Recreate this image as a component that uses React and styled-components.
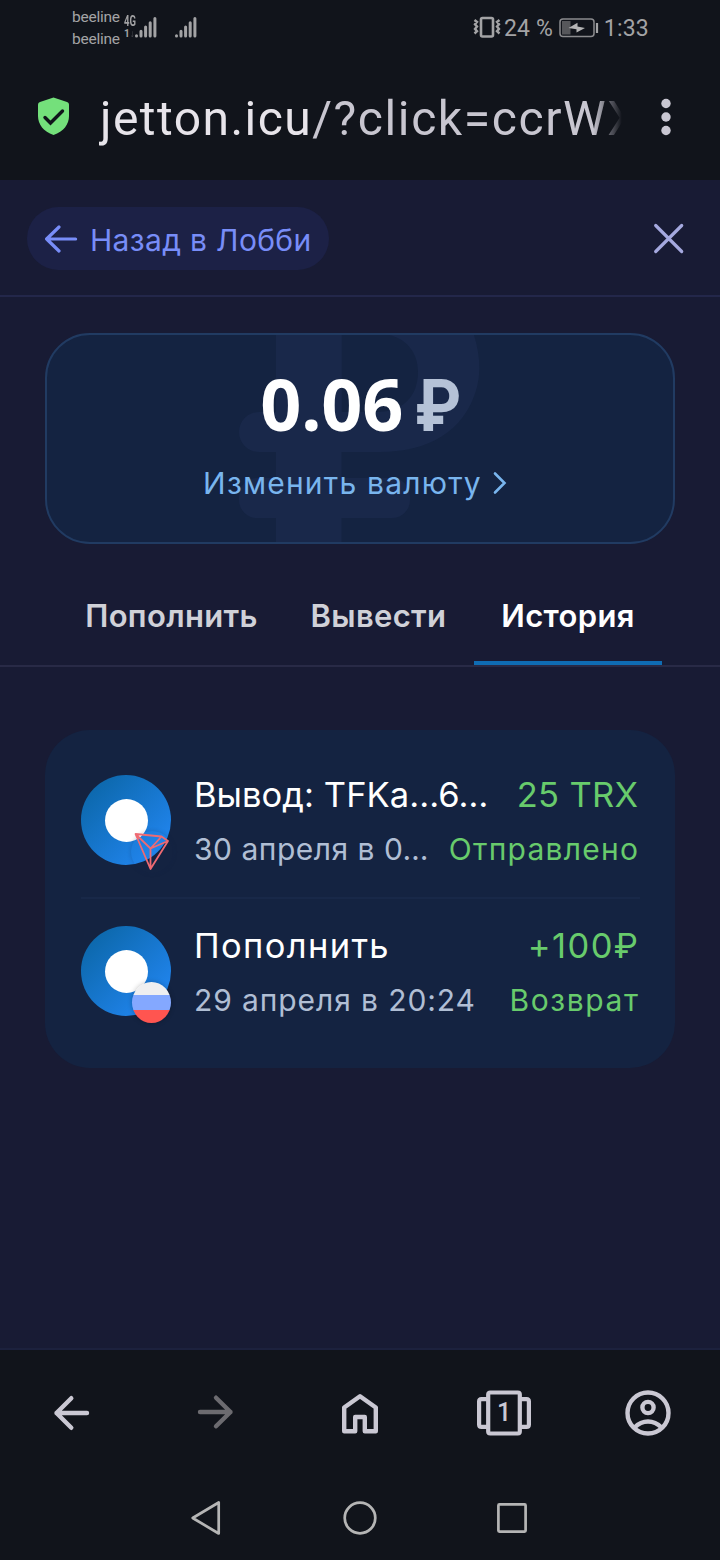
import React from 'react'
import styled, { createGlobalStyle } from 'styled-components'

const operations = [
    {
        title: 'Вывод: TFKa...6…',
        date: '30 апреля в 0…',
        amount: '25 TRX',
        status: 'Отправлено',
        coin: 'trx',
        titleSpace: 0.05,
        dateSpace: 0.5,
        amountSpace: 0.3,
        statusSpace: 1.25,
    },
    {
        title: 'Пополнить',
        date: '29 апреля в 20:24',
        amount: '+100₽',
        status: 'Возврат',
        coin: 'rub',
        titleSpace: 1.35,
        dateSpace: 0.9,
        amountSpace: 1.4,
        statusSpace: 1.6,
    },
]

const Signal = () => (
    <svg width="24" height="24" viewBox="0 0 24 24" stroke="#a3a3a5" strokeWidth="3" strokeLinecap="round">
        <path d="M2.5 19.8v.1M7 15.3v4.600M11.600 11v8.900M16.200 6.800v13.100M20.900 2.600v17.300" />
    </svg>
)

const Vibrate = () => (
    <svg width="28" height="24" viewBox="0 0 28 24" fill="none" stroke="#a3a3a5">
        <rect x="8" y="2" width="12" height="18.5" rx="1.5" strokeWidth="2.6" />
        <path d="M1.5 4l2.5 2-2 2.3 2 2.3-2 2.3 2 2.3-2.5 2.3M26.5 4l-2.5 2 2 2.3-2 2.3 2 2.3-2 2.3 2.5 2.3" strokeWidth="2.4" />
    </svg>
)

const Battery = () => (
    <svg width="40" height="22" viewBox="0 0 40 22" fill="none">
        <rect x="1" y="2" width="34" height="17.5" rx="3" stroke="#8b8b8e" strokeWidth="1.5" />
        <rect x="3" y="4" width="8.5" height="13.5" fill="#56575b" />
        <path d="M9.5 11l9-5.200v3.700l7.500 1.500-8.500 4.600v-3.400z" fill="#b4b4b5" />
        <path d="M38 6v10" stroke="#a3a3a5" strokeWidth="2.2" />
    </svg>
)

const Shield = () => (
    <svg width="32" height="40" viewBox="0 0 32 40">
        <path d="M15.5 .5L29 5c1.300.5 2 1.500 2 2.800V19c0 8.500-5.500 15.500-15.500 19C5.500 34.500 0 27.500 0 19V7.800C0 6.500.7 5.500 2 5z" fill="#74e07b" />
        <path d="M7 20.5l5.500 5.500L24.500 14" fill="none" stroke="#11141b" strokeWidth="3.4" strokeLinecap="round" />
    </svg>
)

const Dots = () => (
    <svg width="10" height="38" viewBox="0 0 10 38" fill="#c9c7d2">
        <circle cx="5" cy="5.5" r="4.7" />
        <circle cx="5" cy="19" r="4.7" />
        <circle cx="5" cy="32.5" r="4.7" />
    </svg>
)

const BackArrow = () => (
    <svg width="34" height="30" viewBox="0 0 34 30" fill="none" stroke="#788df8" strokeWidth="3.2" strokeLinecap="round" strokeLinejoin="round">
        <path d="M14 3L1.6 15 14 27M1.6 15h29" />
    </svg>
)

const Cross = () => (
    <svg width="32" height="32" viewBox="0 0 32 32" stroke="#a5a9df" strokeWidth="3.2" strokeLinecap="round">
        <path d="M2.7 3.5l26 26M28.7 3.5l-26 26" />
    </svg>
)

const Chevron = () => (
    <svg width="14" height="24" viewBox="0 0 14 24" fill="none" stroke="#79b5ee" strokeWidth="2.6" strokeLinecap="round">
        <path d="M2 2.5l9.500 9.500L2 21.500" />
    </svg>
)

/* big currency mark behind the balance */
const Watermark = () => (
    <svg width="242" height="207" viewBox="0 0 242 207" fill="#19284a">
        <rect x="37" y="0" width="65.5" height="207" />
        <rect x="0" y="143" width="171" height="40" rx="18" />
        <path fillRule="evenodd" d="M20 77H37V0H235Q244 30 238 52C226 98 187 117 141 117H20A20 20 0 0 1 20 77zM102.500 0V77H138C164 77 179 61 179 37C179 18 168 4 150 0z" />
    </svg>
)

const Tron = () => (
    <svg width="42" height="42" viewBox="0 0 42 42" fill="none" stroke="#ee6a72" strokeWidth="1.8" strokeLinejoin="round">
        <path d="M4.5 3l26 2.500 6.500 4.500L19.500 38zM4.500 3l15 14.500L37 10M30.500 5.500L19.500 17.500V38" />
    </svg>
)

const BackIcon = () => (
    <svg width="40" height="40" viewBox="0 0 40 40" fill="none" stroke="#cac8d3" strokeWidth="4.4" strokeLinecap="round" strokeLinejoin="round">
        <path d="M19.3 5.200L4.500 20l14.800 14.800M4.500 20h30.500" />
    </svg>
)

const ForwardIcon = () => (
    <svg width="40" height="40" viewBox="0 0 40 40" fill="none" stroke="#6c6b70" strokeWidth="4.4" strokeLinecap="round" strokeLinejoin="round">
        <path d="M20 4.7L34.500 19 20 33.300M34.500 19H4" />
    </svg>
)

const HomeIcon = () => (
    <svg width="40" height="44" viewBox="0 0 40 44" fill="none" stroke="#cac8d3" strokeWidth="4.4" strokeLinejoin="round">
        <path d="M4.2 16.500L20 5.200 35.800 16.500v23.800H24.800V26h-9.600v14.300H4.200z" />
    </svg>
)

const ProfileIcon = () => (
    <svg width="46" height="46" viewBox="0 0 46 46" fill="none" stroke="#cac8d3" strokeWidth="4.4">
        <circle cx="23" cy="23" r="20.5" />
        <circle cx="23" cy="17.5" r="5.6" />
        <path d="M9.5 37.500c8-8 19-8 27 0" />
    </svg>
)

const TabsFrame = () => (
    <svg width="54" height="46" viewBox="0 0 54 46" fill="none" stroke="#cac8d3" strokeWidth="4.2">
        <rect x="11.2" y="2.5" width="31.6" height="41" rx="2" />
        <path d="M11 9.200H4.500q-2.400 0-2.400 2.400v22.800q0 2.400 2.400 2.400H11M43 9.200h6.500q2.400 0 2.400 2.400v22.800q0 2.400-2.400 2.400H43" />
    </svg>
)

const SysBack = () => (
    <svg width="36" height="36" viewBox="0 0 36 36" fill="none" stroke="#b5b5b5" strokeWidth="2.7" strokeLinejoin="round">
        <path d="M28.7 2.500v31L2.700 18z" />
    </svg>
)

const SysHome = () => (
    <svg width="36" height="36" viewBox="0 0 36 36" fill="none" stroke="#b5b5b5" strokeWidth="2.7">
        <circle cx="18" cy="18" r="15.3" />
    </svg>
)

const SysRecent = () => (
    <svg width="36" height="36" viewBox="0 0 36 36" fill="none" stroke="#b5b5b5" strokeWidth="2.7">
        <rect x="4.4" y="4.4" width="27.2" height="27.2" rx="1" />
    </svg>
)

const Operation = ({ item }) => (
    <Row>
        <Avatar>
            <Hole />
            {item.coin === 'trx' ? <TronBadge><Tron /></TronBadge> : <FlagBadge />}
        </Avatar>
        <Info>
            <Line>
                <Title $space={item.titleSpace}>{item.title}</Title>
                <Amount $space={item.amountSpace}>{item.amount}</Amount>
            </Line>
            <Line>
                <DateText $space={item.dateSpace}>{item.date}</DateText>
                <Status $space={item.statusSpace}>{item.status}</Status>
            </Line>
        </Info>
    </Row>
)

const App = () => {
    return (
        <Screen>
            <GlobalStyle />
            <StatusBar>
                <Carriers>
                    <span>beeline</span>
                    <span>beeline</span>
                </Carriers>
                <Network>
                    <b>4G</b>
                    <small>1<i>↓</i></small>
                </Network>
                <Signal />
                <SecondSignal><Signal /></SecondSignal>
                <StatusRight>
                    <Vibrate />
                    <Percent>24 %</Percent>
                    <Battery />
                    <Clock>1:33</Clock>
                </StatusRight>
            </StatusBar>
            <AddressBar>
                <Shield />
                <Url>jetton.icu<span>/?click=ccrWX</span></Url>
                <Dots />
            </AddressBar>
            <Header>
                <BackButton>
                    <BackArrow />
                    <span>Назад в Лобби</span>
                </BackButton>
                <Cross />
            </Header>
            <Page>
                <BalanceCard>
                    <Mark><Watermark /></Mark>
                    <Balance>0.06<span>₽</span></Balance>
                    <Change><span>Изменить валюту</span><Chevron /></Change>
                </BalanceCard>
                <Tabs>
                    <Tab $width={223}>Пополнить</Tab>
                    <Tab $width={191}>Вывести</Tab>
                    <Tab $width={188} $active>История</Tab>
                </Tabs>
                <List>
                    <Operation item={operations[0]} />
                    <Divider />
                    <Operation item={operations[1]} />
                </List>
            </Page>
            <BrowserNav>
                <BackIcon />
                <ForwardIcon />
                <HomeIcon />
                <TabsButton>
                    <TabsFrame />
                    <span>1</span>
                </TabsButton>
                <ProfileIcon />
            </BrowserNav>
            <SystemNav>
                <SysBack />
                <SysHome />
                <SysRecent />
            </SystemNav>
        </Screen>
    )
}

export default App

const GlobalStyle = createGlobalStyle`
* {
    box-sizing: border-box;
}

body {
    margin: 0;
    background: #11141b;
    font-family: Roboto, "Noto Sans", sans-serif;
}

svg {
    display: block;
    flex-shrink: 0;
}
`

const Screen = styled.div`
width: 720px;
height: 1560px;
display: flex;
flex-direction: column;
overflow: hidden;
background-color: #11141b;
`

const StatusBar = styled.div`
height: 56px;
display: flex;
align-items: center;
padding: 0 71px 0 72px;
color: #a3a3a5;
`

const Carriers = styled.div`
display: flex;
flex-direction: column;
width: 52px;
font-size: 15.5px;
line-height: 22px;
letter-spacing: -0.25px;
`

const Network = styled.div`
display: flex;
flex-direction: column;
width: 10px;
padding-bottom: 1px;

b {
    font-size: 14px;
    line-height: 13px;
    transform: scaleX(0.68);
    transform-origin: left;
}

small {
    font-size: 10px;
    line-height: 12px;
    font-weight: bold;
    white-space: nowrap;
}

i {
    opacity: 0.4;
    font-style: normal;
}
`

const SecondSignal = styled.div`
margin-left: 16px;
`

const StatusRight = styled.div`
display: flex;
align-items: center;
margin-left: auto;
font-size: 23px;
line-height: 28px;
`

const Percent = styled.span`
margin: 1px 6px 0 3px;
letter-spacing: 0.1px;
`

const Clock = styled.span`
margin: 1px 0 0 5px;
letter-spacing: 0.2px;
`

const AddressBar = styled.div`
height: 124px;
display: flex;
align-items: center;
padding: 0 49px 2px 38px;
`

const Url = styled.div`
width: 523px;
margin-left: 29px;
margin-right: 39px;
padding: 4px 0 0 1px;
overflow: hidden;
white-space: nowrap;
font-size: 48px;
line-height: 62px;
letter-spacing: 1.45px;
color: #e7e4ea;
mask-image: linear-gradient(90deg, #000 494px, transparent 523px);

span {
    color: #c8c6d0;
    letter-spacing: 1.6px;
}
`

const Header = styled.div`
height: 117px;
display: flex;
align-items: center;
justify-content: space-between;
padding: 0 35px 0 27px;
background-color: #181b34;
border-bottom: 2px solid #23274a;
`

const BackButton = styled.div`
width: 302px;
height: 63px;
margin-top: 2px;
display: flex;
align-items: center;
padding: 0 0 0 18px;
border-radius: 32px;
background-color: #1c2146;
color: #788df8;
font-family: Inter, Roboto, sans-serif;
font-size: 30px;
letter-spacing: 0.33px;
white-space: nowrap;

span {
    margin: 2px 0 0 11px;
}
`

const Page = styled.div`
height: 1053px;
display: flex;
flex-direction: column;
background-color: #181b34;
border-bottom: 2px solid #1c213d;
font-family: Inter, Roboto, sans-serif;
`

const BalanceCard = styled.div`
position: relative;
height: 211px;
margin: 36px 45px 0;
padding-top: 26px;
display: flex;
flex-direction: column;
align-items: center;
border: 2px solid #213b62;
border-radius: 45px;
overflow: hidden;
background-color: #142341;
`

const Mark = styled.div`
position: absolute;
left: 192px;
top: 0;
`

const Balance = styled.div`
position: relative;
display: flex;
align-items: center;
height: 84px;
margin-left: 4px;
font-family: "Noto Sans", Roboto, sans-serif;
font-size: 72px;
line-height: 84px;
font-weight: bold;
color: #fff;
letter-spacing: -0.2px;
white-space: nowrap;

span {
    margin: 7px 0 0 10px;
    font-family: Roboto, sans-serif;
    transform: scaleX(0.9);
    color: #b5c2d7;
}
`

const Change = styled.div`
position: relative;
display: flex;
align-items: center;
gap: 11px;
margin: 3px 10px 0 0;
height: 70px;
font-size: 30px;
letter-spacing: 1.2px;
color: #79b5ee;
`

const Tabs = styled.div`
height: 123px;
display: flex;
padding-left: 60px;
align-items: flex-end;
border-bottom: 2px solid #282a46;
`

const Tab = styled.div`
width: ${props => props.$width}px;
height: 92px;
display: flex;
justify-content: center;
padding-top: 22px;
font-size: 31px;
line-height: 42px;
font-weight: 600;
letter-spacing: 0.33px;
color: ${props => props.$active ? '#fff' : '#d0d1d8'};
border-bottom: 4px solid ${props => props.$active ? '#0f6cb3' : 'transparent'};
`

const List = styled.div`
height: 338px;
margin: 63px 45px 0;
padding: 45px 36px 0;
border-radius: 45px;
background-color: #142341;
`

const Row = styled.div`
height: 90px;
display: flex;
`

const Divider = styled.div`
height: 2px;
margin: 32px -1px 27px 0;
background-color: #182848;
`

const Avatar = styled.div`
position: relative;
flex-shrink: 0;
width: 90px;
height: 90px;
display: flex;
align-items: center;
justify-content: center;
border-radius: 50%;
background: linear-gradient(135deg, #0d69ae 15%, #1f82e8 80%);
`

const Hole = styled.div`
width: 43px;
height: 43px;
border-radius: 50%;
background-color: #fff;
`

const TronBadge = styled.div`
position: absolute;
left: 50px;
top: 56px;
width: 42px;
height: 42px;
border-radius: 50%;
box-shadow: 0 0 4px rgba(20, 35, 75, 0.25);
`

const FlagBadge = styled.div`
position: absolute;
left: 51px;
top: 56px;
width: 39px;
height: 41px;
border-radius: 50%;
background: linear-gradient(#efeff0 13px, #84a8ff 13px 28px, #ff5550 28px);
box-shadow: 0 0 5px rgba(0, 0, 0, 0.25);
`

const Info = styled.div`
flex: 1;
min-width: 0;
margin: -7px 0 0 23px;
padding-right: 1px;
`

const Line = styled.div`
height: 54px;
display: flex;
align-items: center;
justify-content: space-between;
white-space: nowrap;
`

const Title = styled.span`
margin-top: -2px;
font-size: 34.5px;
letter-spacing: ${props => props.$space}px;
color: #fff;
`

const Amount = styled.span`
margin-top: -2px;
font-size: 34.5px;
letter-spacing: ${props => props.$space}px;
margin-right: -${props => props.$space}px;
color: #68cb6c;
`

const DateText = styled.span`
font-size: 30px;
letter-spacing: ${props => props.$space}px;
color: #b0bed4;
`

const Status = styled.span`
font-size: 30px;
letter-spacing: ${props => props.$space}px;
margin-right: -${props => props.$space}px;
color: #68cb6c;
`

const BrowserNav = styled.div`
height: 126px;
display: grid;
grid-template-columns: repeat(5, 144px);
align-items: center;
justify-items: center;
`

const TabsButton = styled.div`
position: relative;

span {
    position: absolute;
    left: 0;
    top: 8px;
    width: 54px;
    text-align: center;
    font-size: 25px;
    line-height: 30px;
    font-weight: 500;
    color: #cac8d3;
}
`

const SystemNav = styled.div`
height: 84px;
display: grid;
grid-template-columns: repeat(3, 152px);
justify-content: center;
align-items: center;
justify-items: center;
`
